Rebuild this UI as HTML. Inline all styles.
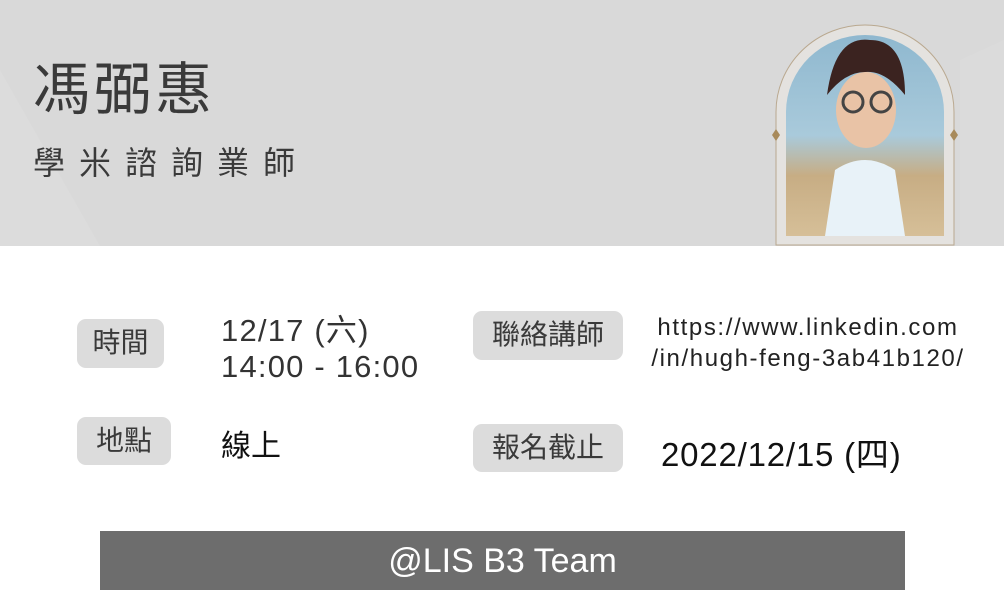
<!DOCTYPE html>
<html><head><meta charset="utf-8"><style>
*{margin:0;padding:0;box-sizing:border-box}
body{width:1004px;height:590px;background:#fff;position:relative;overflow:hidden;font-family:"Liberation Sans","Noto Sans CJK TC",sans-serif}
.hdr{position:absolute;left:0;top:0;width:1004px;height:246px;background:#d9d9d9;overflow:hidden}
.a{position:absolute;white-space:nowrap}
.lab{position:absolute;background:#dcdcdc;border-radius:9px;color:#3a3a3a;font-size:28px;text-align:center;line-height:48px}
.val{position:absolute;color:#333;font-size:30px;white-space:nowrap}
</style></head><body>
<div class="hdr">
 <svg width="1004" height="246" style="position:absolute;left:0;top:0">
  <polygon points="0,70 100,246 0,246" fill="#dcdcdc"/>
  <polygon points="960,60 1004,40 1004,246 960,246" fill="#dbdbdb"/>
 </svg>
 <div class="a" style="left:33px;top:44px;font-size:57px;color:#3a3a3a;letter-spacing:4px">馮弼惠</div>
 <div class="a" style="left:33px;top:138px;font-size:32px;color:#3a3a3a;letter-spacing:14px">學米諮詢業師</div>
 <svg width="200" height="246" style="position:absolute;left:765px;top:0">
  <path d="M11,245 V112 A89,87 0 0 1 189,112 V245 Z" fill="#e4e2df" stroke="#b9a88f" stroke-width="1"/>
  <defs><linearGradient id="g" x1="0" y1="0" x2="0" y2="1">
   <stop offset="0" stop-color="#8fb8cf"/><stop offset="0.5" stop-color="#a9cadb"/><stop offset="0.7" stop-color="#c7ad84"/><stop offset="1" stop-color="#d6bf98"/></linearGradient></defs>
  <path d="M21,236 V112 A79,77 0 0 1 179,112 V236 Z" fill="url(#g)"/>
  <path d="M60,236 L70,170 Q100,150 130,170 L140,236Z" fill="#e8f2f8"/>
  <ellipse cx="101" cy="110" rx="30" ry="38" fill="#e9c3a6"/>
  <path d="M62,95 Q70,35 105,40 Q140,40 140,95 Q120,70 100,72 Q80,72 62,95Z" fill="#3b2320"/>
  <circle cx="88" cy="102" r="10" fill="none" stroke="#444" stroke-width="3"/>
  <circle cx="116" cy="102" r="10" fill="none" stroke="#444" stroke-width="3"/>
  <path d="M11,129 l4,6 -4,6 -4,-6z" fill="#a88a5a"/>
  <path d="M189,129 l4,6 -4,6 -4,-6z" fill="#a88a5a"/>
 </svg>
</div>
<div class="lab" style="left:77px;top:319px;width:87px;height:49px">時間</div>
<div class="lab" style="left:77px;top:417px;width:94px;height:48px">地點</div>
<div class="lab" style="left:473px;top:311px;width:150px;height:49px">聯絡講師</div>
<div class="lab" style="left:473px;top:424px;width:150px;height:48px">報名截止</div>
<div class="val" style="left:221px;top:313px;line-height:36px;font-size:31px;letter-spacing:1.2px">12/17 (六)<br>14:00 - 16:00</div>
<div class="val" style="left:221px;top:421px;color:#111">線上</div>
<div class="val" style="left:630px;top:312px;width:356px;text-align:center;font-size:24px;letter-spacing:1.6px;line-height:31px;color:#222">https://www.linkedin.com<br>/in/hugh-feng-3ab41b120/</div>
<div class="val" style="left:661px;top:428px;font-size:33px;letter-spacing:0.8px;color:#111">2022/12/15 (四)</div>
<div class="a" style="left:100px;top:531px;width:805px;height:59px;background:#6d6d6d;color:#fff;font-size:34px;text-align:center;line-height:60px">@LIS B3 Team</div>
</body></html>
